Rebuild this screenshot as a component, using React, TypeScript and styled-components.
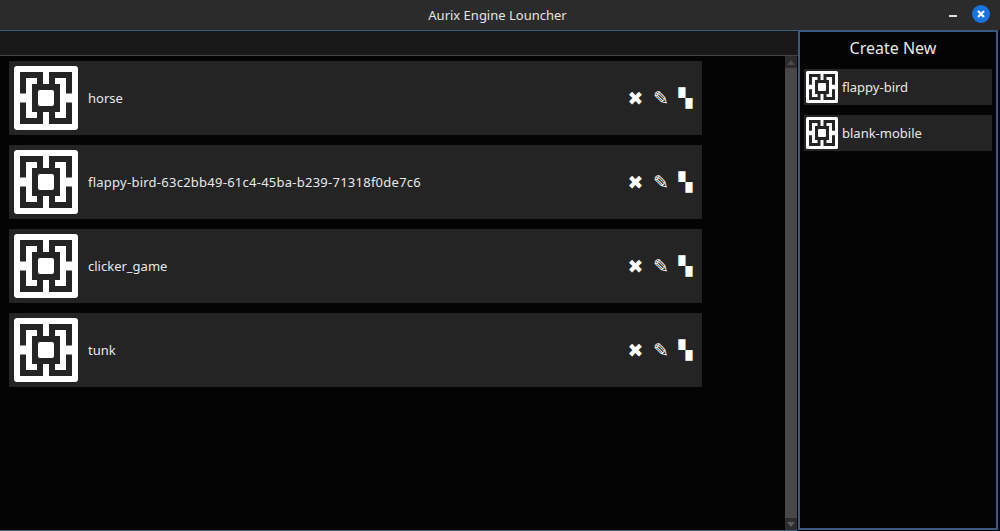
import React from 'react';
import styled, { createGlobalStyle } from 'styled-components';

const GlobalStyle = createGlobalStyle`
    html, body {
        margin: 0;
        padding: 0;
        background: #000;
    }
    body {
        font-family: "Noto Sans", "Open Sans", sans-serif;
        color: #e8e8e8;
    }
`;

const Window = styled.div`
    width: 1000px;
    height: 531px;
    display: flex;
    flex-direction: column;
    overflow: hidden;
    background: #040404;
`;

const TitleBar = styled.div`
    position: relative;
    flex: 0 0 30px;
    box-sizing: border-box;
    padding-right: 5px;
    display: flex;
    align-items: center;
    justify-content: center;
    background: #2b2b2b;
    font-size: 13px;
    color: #e4e4e4;
`;

const TitleActions = styled.div`
    position: absolute;
    top: 5px;
    right: 10px;
    display: flex;
    align-items: center;
    gap: 15px;
`;

const Minimize = styled.div`
    width: 8px;
    height: 2px;
    margin-top: 3px;
    background: #e0e0e0;
`;

const CloseCircle = styled.div`
    width: 18px;
    height: 18px;
    border-radius: 50%;
    background: #1a73e0;
    display: flex;
    align-items: center;
    justify-content: center;
`;

const Body = styled.div`
    flex: 1;
    display: flex;
    min-height: 0;
`;

const Main = styled.div`
    flex: 0 0 798px;
    display: flex;
    flex-direction: column;
    border-top: 1px solid #3a5a80;
    border-bottom: 1px solid #3a5a80;
`;

const TabStrip = styled.div`
    flex: 0 0 25px;
    background: #191919;
    border-bottom: 1px solid #444;
    box-sizing: border-box;
`;

const MainBody = styled.div`
    flex: 1;
    display: flex;
    min-height: 0;
`;

const ProjectList = styled.div`
    flex: 1;
    padding: 5px 0 0 9px;
    display: flex;
    flex-direction: column;
    gap: 10px;
`;

const ProjectRow = styled.div`
    width: 693px;
    height: 74px;
    box-sizing: border-box;
    padding: 5px 5px 5px 5px;
    background: #242424;
    display: flex;
    align-items: center;
`;

const ProjectName = styled.div<{ $tracking: number }>`
    flex: 1;
    margin-left: 10px;
    font-size: 13px;
    letter-spacing: ${(p) => p.$tracking}px;
`;

const RowActions = styled.div`
    display: flex;
    align-items: center;
    font-family: "DejaVu Sans", sans-serif;
    line-height: 24px;
    color: #fff;
`;

const ActionGlyph = styled.span<{ $width: number; $size: number }>`
    width: ${(p) => p.$width}px;
    font-size: ${(p) => p.$size}px;
    text-align: center;
`;

const ScrollBar = styled.div`
    flex: 0 0 12px;
    margin-right: 1px;
    display: flex;
    flex-direction: column;
    background: #484848;
`;

const ScrollArrow = styled.div`
    flex: 0 0 12px;
    background: #2c2c2c;
    display: flex;
    align-items: center;
    justify-content: center;
`;

const ScrollThumb = styled.div`
    flex: 1;
    background: #484848;
`;

const SidePanel = styled.div`
    flex: 0 0 200px;
    margin-bottom: 1px;
    box-sizing: border-box;
    border: 2px solid #3a5a80;
    background: #040404;
    padding: 0 4px;
    display: flex;
    flex-direction: column;
`;

const SideTitle = styled.div`
    height: 32px;
    padding-right: 10px;
    display: flex;
    align-items: center;
    justify-content: center;
    font-size: 16px;
    margin-bottom: 5px;
`;

const TemplateList = styled.div`
    display: flex;
    flex-direction: column;
    gap: 10px;
`;

const TemplateRow = styled.div`
    height: 36px;
    background: #242424;
    padding: 2px;
    box-sizing: border-box;
    display: flex;
    align-items: center;
    gap: 4px;
    font-size: 13px;
`;

const LogoIcon = ({ size }: { size: number }) => (
    <svg width={size} height={size} viewBox="0 0 64 64" style={{ flexShrink: 0 }}>
        <rect width="64" height="64" rx="3" fill="#fff" />
        <g fill="#242424">
            <path d="M6 6H29V18H23V12H12V27.5H6Z" />
            <path d="M58 6H35V18H41V12H52V27.5H58Z" />
            <path d="M6 58H29V46H23V52H12V36.5H6Z" />
            <path d="M58 58H35V46H41V52H52V36.5H58Z" />
            <path fillRule="evenodd" d="M18 18H46V46H18ZM26 24Q24 24 24 26V38Q24 40 26 40H38Q40 40 40 38V26Q40 24 38 24Z" />
        </g>
    </svg>
);

const projects = [
    { name: 'horse', tracking: 0 },
    { name: 'flappy-bird-63c2bb49-61c4-45ba-b239-71318f0de7c6', tracking: 0.25 },
    { name: 'clicker_game', tracking: 0 },
    { name: 'tunk', tracking: 0 },
];
const templates = ['flappy-bird', 'blank-mobile'];

export default function App() {
    return (
        <Window>
            <GlobalStyle />
            <TitleBar>
                Aurix Engine Louncher
                <TitleActions>
                    <Minimize />
                    <CloseCircle>
                        <svg width="10" height="10" viewBox="0 0 10 10">
                            <path d="M2 2L8 8M8 2L2 8" stroke="#fff" strokeWidth="2.2" />
                        </svg>
                    </CloseCircle>
                </TitleActions>
            </TitleBar>
            <Body>
                <Main>
                    <TabStrip />
                    <MainBody>
                        <ProjectList>
                            {projects.map((project) => (
                                <ProjectRow key={project.name}>
                                    <LogoIcon size={64} />
                                    <ProjectName $tracking={project.tracking}>{project.name}</ProjectName>
                                    <RowActions>
                                        <ActionGlyph $width={25} $size={19}>✖</ActionGlyph>
                                        <ActionGlyph $width={26} $size={19}>✎</ActionGlyph>
                                        <ActionGlyph $width={23} $size={18}>▚</ActionGlyph>
                                    </RowActions>
                                </ProjectRow>
                            ))}
                        </ProjectList>
                        <ScrollBar>
                            <ScrollArrow>
                                <svg width="8" height="5" viewBox="0 0 8 5"><path d="M4 0L8 5H0Z" fill="#4a4a4a" /></svg>
                            </ScrollArrow>
                            <ScrollThumb />
                            <ScrollArrow>
                                <svg width="8" height="5" viewBox="0 0 8 5"><path d="M4 5L0 0H8Z" fill="#5a5a5a" /></svg>
                            </ScrollArrow>
                        </ScrollBar>
                    </MainBody>
                </Main>
                <SidePanel>
                    <SideTitle>Create New</SideTitle>
                    <TemplateList>
                        {templates.map((name) => (
                            <TemplateRow key={name}>
                                <LogoIcon size={32} />
                                {name}
                            </TemplateRow>
                        ))}
                    </TemplateList>
                </SidePanel>
            </Body>
        </Window>
    );
}
